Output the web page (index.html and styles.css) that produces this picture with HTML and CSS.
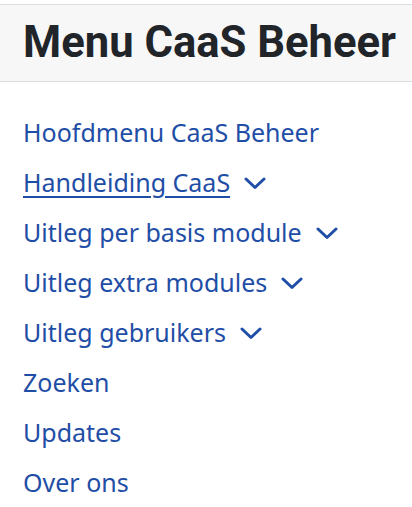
FILE: index.html
```html
<!DOCTYPE html>
<html lang="nl">
<head>
<meta charset="utf-8">
<title>Menu CaaS Beheer</title>
<link rel="stylesheet" href="styles.css">
</head>
<body>
<div class="panel">
  <div class="panel-header">
    <h1 class="panel-title">Menu CaaS Beheer</h1>
  </div>
  <ul class="menu">
    <li class="menu-item"><a class="menu-link" href="#">Hoofdmenu CaaS Beheer</a></li>
    <li class="menu-item"><a class="menu-link active" href="#">Handleiding CaaS</a><svg class="chev" viewBox="0 0 22 13" width="22" height="13"><path d="M2 2 L11 10.5 L20 2" fill="none" stroke="currentColor" stroke-width="3" stroke-linecap="round" stroke-linejoin="round"/></svg></li>
    <li class="menu-item"><a class="menu-link" href="#">Uitleg per basis module</a><svg class="chev" viewBox="0 0 22 13" width="22" height="13"><path d="M2 2 L11 10.5 L20 2" fill="none" stroke="currentColor" stroke-width="3" stroke-linecap="round" stroke-linejoin="round"/></svg></li>
    <li class="menu-item"><a class="menu-link" href="#">Uitleg extra modules</a><svg class="chev" viewBox="0 0 22 13" width="22" height="13"><path d="M2 2 L11 10.5 L20 2" fill="none" stroke="currentColor" stroke-width="3" stroke-linecap="round" stroke-linejoin="round"/></svg></li>
    <li class="menu-item"><a class="menu-link" href="#">Uitleg gebruikers</a><svg class="chev" viewBox="0 0 22 13" width="22" height="13"><path d="M2 2 L11 10.5 L20 2" fill="none" stroke="currentColor" stroke-width="3" stroke-linecap="round" stroke-linejoin="round"/></svg></li>
    <li class="menu-item"><a class="menu-link" href="#">Zoeken</a></li>
    <li class="menu-item"><a class="menu-link" href="#">Updates</a></li>
    <li class="menu-item"><a class="menu-link" href="#">Over ons</a></li>
  </ul>
</div>
</body>
</html>
```
FILE: styles.css
```css
html, body {
  margin: 0;
  padding: 0;
  background: #ffffff;
}
.panel {
  padding-top: 4px;
}
.panel-header {
  background: #f7f7f8;
  border-top: 1px solid #dcdde3;
  border-bottom: 1px solid #dcdde3;
  height: 76px;
  display: flex;
  align-items: center;
  padding-left: 23px;
}
.panel-title {
  margin: 0;
  font-family: Roboto, "Liberation Sans", sans-serif;
  font-weight: 700;
  font-size: 43.6px;
  line-height: 1;
  color: #212529;
}
.menu {
  list-style: none;
  margin: 25px 0 0 0;
  padding: 0 0 0 23px;
}
.menu-item {
  display: flex;
  align-items: center;
  gap: 14px;
  height: 50px;
  font-family: "Noto Sans", "Open Sans", sans-serif;
  font-size: 25px;
  color: #1f4ea6;
}
.menu-link {
  color: #1f4ea6;
  text-decoration: none;
}
.menu-link.active {
  text-decoration: underline;
  text-underline-offset: 4px;
  text-decoration-thickness: 2px;
}
.chev {
  display: block;
  color: #1f4ea6;
  margin-top: 2px;
}
```
